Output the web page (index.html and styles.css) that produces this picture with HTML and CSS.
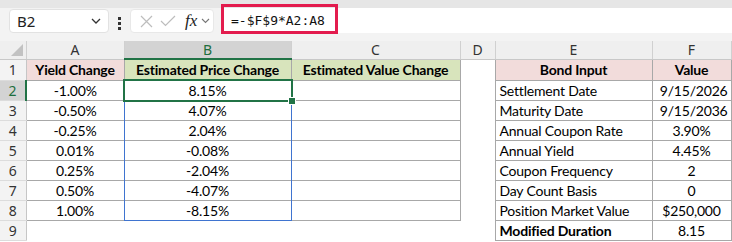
FILE: index.html
```html
<!DOCTYPE html>
<html lang="en">
<head>
  <meta charset="UTF-8">
  <title>Modified Duration</title>
  <link rel="stylesheet" href="styles.css">
</head>
<body>
  <div class="toolbar">
    <div class="namebox">
      <span>B2</span>
      <svg width="10" height="6" viewBox="0 0 10 6"><path d="M1 1 L5 5 L9 1" fill="none" stroke="#333" stroke-width="1.3"/></svg>
    </div>
    <div class="dots"><i></i><i></i><i></i></div>
    <div class="fxbox">
      <svg width="13" height="13" viewBox="0 0 13 13"><path d="M1 1 L12 12 M12 1 L1 12" stroke="#bdbdbd" stroke-width="1.2"/></svg>
      <svg width="16" height="12" viewBox="0 0 16 12"><path d="M1 6 L5.5 10.5 L15 1" fill="none" stroke="#bdbdbd" stroke-width="1.2"/></svg>
      <span class="fx">fx</span>
      <svg width="9" height="6" viewBox="0 0 9 6"><path d="M1 1 L4.5 4.5 L8 1" fill="none" stroke="#777" stroke-width="1.1"/></svg>
    </div>
    <div class="formula">
      <span class="formula-text">=-$F$9*A2:A8</span>
      <div class="callout"></div>
    </div>
  </div>

  <table class="sheet">
    <colgroup>
      <col style="width:26px"><col style="width:98px"><col style="width:167px"><col style="width:169px">
      <col style="width:35px"><col style="width:157px"><col style="width:79px"><col>
    </colgroup>
    <tr class="colheads">
      <th class="corner"><span class="tri"></span></th>
      <th>A</th><th class="active">B</th><th>C</th><th>D</th><th>E</th><th>F</th><th></th>
    </tr>
    <tr class="r1">
      <th class="rh">1</th>
      <td class="bx pink b">Yield Change</td>
      <td class="bx green b">Estimated Price Change</td>
      <td class="bx green b">Estimated Value Change</td>
      <td></td>
      <td class="bx pink b">Bond Input</td>
      <td class="bx pink b">Value</td>
      <td></td>
    </tr>
    <tr>
      <th class="rh active">2</th>
      <td class="bx">-1.00%</td>
      <td class="bx sel">8.15%<div class="range"></div><div class="cursor"><span class="handle"></span></div></td>
      <td class="bx"></td><td></td>
      <td class="bx left">Settlement Date</td><td class="bx right">9/15/2026</td><td></td>
    </tr>
    <tr>
      <th class="rh">3</th>
      <td class="bx">-0.50%</td><td class="bx">4.07%</td><td class="bx"></td><td></td>
      <td class="bx left">Maturity Date</td><td class="bx right">9/15/2036</td><td></td>
    </tr>
    <tr>
      <th class="rh">4</th>
      <td class="bx">-0.25%</td><td class="bx">2.04%</td><td class="bx"></td><td></td>
      <td class="bx left">Annual Coupon Rate</td><td class="bx">3.90%</td><td></td>
    </tr>
    <tr>
      <th class="rh">5</th>
      <td class="bx">0.01%</td><td class="bx">-0.08%</td><td class="bx"></td><td></td>
      <td class="bx left">Annual Yield</td><td class="bx">4.45%</td><td></td>
    </tr>
    <tr>
      <th class="rh">6</th>
      <td class="bx">0.25%</td><td class="bx">-2.04%</td><td class="bx"></td><td></td>
      <td class="bx left">Coupon Frequency</td><td class="bx">2</td><td></td>
    </tr>
    <tr>
      <th class="rh">7</th>
      <td class="bx">0.50%</td><td class="bx">-4.07%</td><td class="bx"></td><td></td>
      <td class="bx left">Day Count Basis</td><td class="bx">0</td><td></td>
    </tr>
    <tr>
      <th class="rh">8</th>
      <td class="bx">1.00%</td><td class="bx">-8.15%</td><td class="bx"></td><td></td>
      <td class="bx left">Position Market Value</td><td class="bx">$250,000</td><td></td>
    </tr>
    <tr>
      <th class="rh">9</th>
      <td></td><td></td><td></td><td></td>
      <td class="bx left b">Modified Duration</td><td class="bx">8.15</td><td></td>
    </tr>
  </table>
</body>
</html>
```

FILE: styles.css
```css
html, body {
  margin: 0;
  padding: 0;
  overflow: hidden;
  background: #fff;
}
body {
  width: 732px;
  height: 242px;
}

/* formula bar */
.toolbar {
  display: flex;
  align-items: flex-start;
  background: #f3f3f3;
  border-top: 8px solid #e6e6e6;
  box-sizing: border-box;
  height: 41px;
}
.namebox {
  display: flex;
  align-items: center;
  justify-content: space-between;
  box-sizing: border-box;
  width: 100px;
  height: 24px;
  margin: 1px 0 0 9px;
  padding: 0 7px 0 7px;
  background: #fff;
  border: 1px solid #e2e2e2;
  border-radius: 4px;
  font: 15px "Noto Sans", sans-serif;
  color: #222;
}
.dots {
  display: flex;
  flex-direction: column;
  gap: 2px;
  margin: 9px 0 0 9px;
}
.dots i {
  display: block;
  width: 3px;
  height: 3px;
  background: #333;
}
.fxbox {
  display: flex;
  align-items: center;
  gap: 7px;
  box-sizing: border-box;
  width: 84px;
  height: 24px;
  margin: 1px 0 0 9px;
  padding: 0 0 0 9px;
  background: #fff;
  border: 1px solid #e8e8e8;
  border-radius: 4px;
}
.fx {
  font: italic 17px "Liberation Serif", serif;
  color: #222;
  margin-left: 2px;
  margin-right: -3px;
}
.formula {
  position: relative;
  flex: 1;
  height: 25px;
  margin-left: 7px;
  background: #fff;
  display: flex;
  align-items: center;
}
.formula-text {
  padding-left: 10px;
  font: 13px "DejaVu Sans Mono", monospace;
  color: #111;
}
.callout {
  position: absolute;
  left: 0;
  top: -4px;
  width: 117px;
  height: 30px;
  box-sizing: border-box;
  border: 3px solid #e31c4e;
}

/* grid */
.sheet {
  border-collapse: collapse;
  table-layout: fixed;
  width: 732px;
  font: 14px Lato, "Liberation Sans", sans-serif;
  letter-spacing: -0.2px;
  color: #000;
}
.sheet td, .sheet th {
  padding: 0;
  height: 20px;
  box-sizing: border-box;
  text-align: center;
  white-space: nowrap;
  overflow: visible;
}
.colheads th {
  height: 18px;
  background: #efefef;
  border-right: 1px solid #d0d0d0;
  border-bottom: 1px solid #c8c8c8;
  font: 14px "Noto Sans", sans-serif;
  font-weight: normal;
  letter-spacing: 0;
  color: #333;
  line-height: 16px;
}
.colheads th.active {
  background: #d3d3d3;
  color: #1e6e3e;
  border-bottom: 2px solid #217346;
}
.corner {
  position: relative;
}
.tri {
  position: absolute;
  right: 3px;
  bottom: 3px;
  width: 0;
  height: 0;
  border-left: 12px solid transparent;
  border-bottom: 12px solid #c2c2c2;
}
.rh {
  background: #f3f3f3;
  border-right: 1px solid #c6c6c6;
  border-bottom: 1px solid #dcdcdc;
  font: 14px "Noto Sans", sans-serif;
  font-weight: normal;
  letter-spacing: 0;
  color: #333;
}
.rh.active {
  background: #d3d3d3;
  color: #1e6e3e;
  border-right: 2px solid #217346;
}
.r1 td, .r1 th {
  height: 21px;
}
.bx {
  border: 1px solid #a8a8a8;
}
.b {
  font-weight: bold;
}
.pink {
  background: #f2dcdb;
}
.green {
  background: #d8e4bc;
}
.left {
  text-align: left !important;
  padding-left: 4px !important;
}
.right {
  text-align: right !important;
  padding-right: 3px !important;
}

/* selection */
.sel {
  position: relative;
}
.range {
  position: absolute;
  left: -1px;
  top: -1px;
  width: 168px;
  height: 141px;
  box-sizing: border-box;
  border: 1px solid #3f74d0;
  pointer-events: none;
}
.cursor {
  position: absolute;
  left: -2px;
  top: -2px;
  width: 170px;
  height: 23px;
  box-sizing: border-box;
  border: 2px solid #217346;
}
.handle {
  position: absolute;
  right: -5px;
  bottom: -5px;
  width: 6px;
  height: 6px;
  background: #217346;
  border: 1px solid #fff;
}
```
